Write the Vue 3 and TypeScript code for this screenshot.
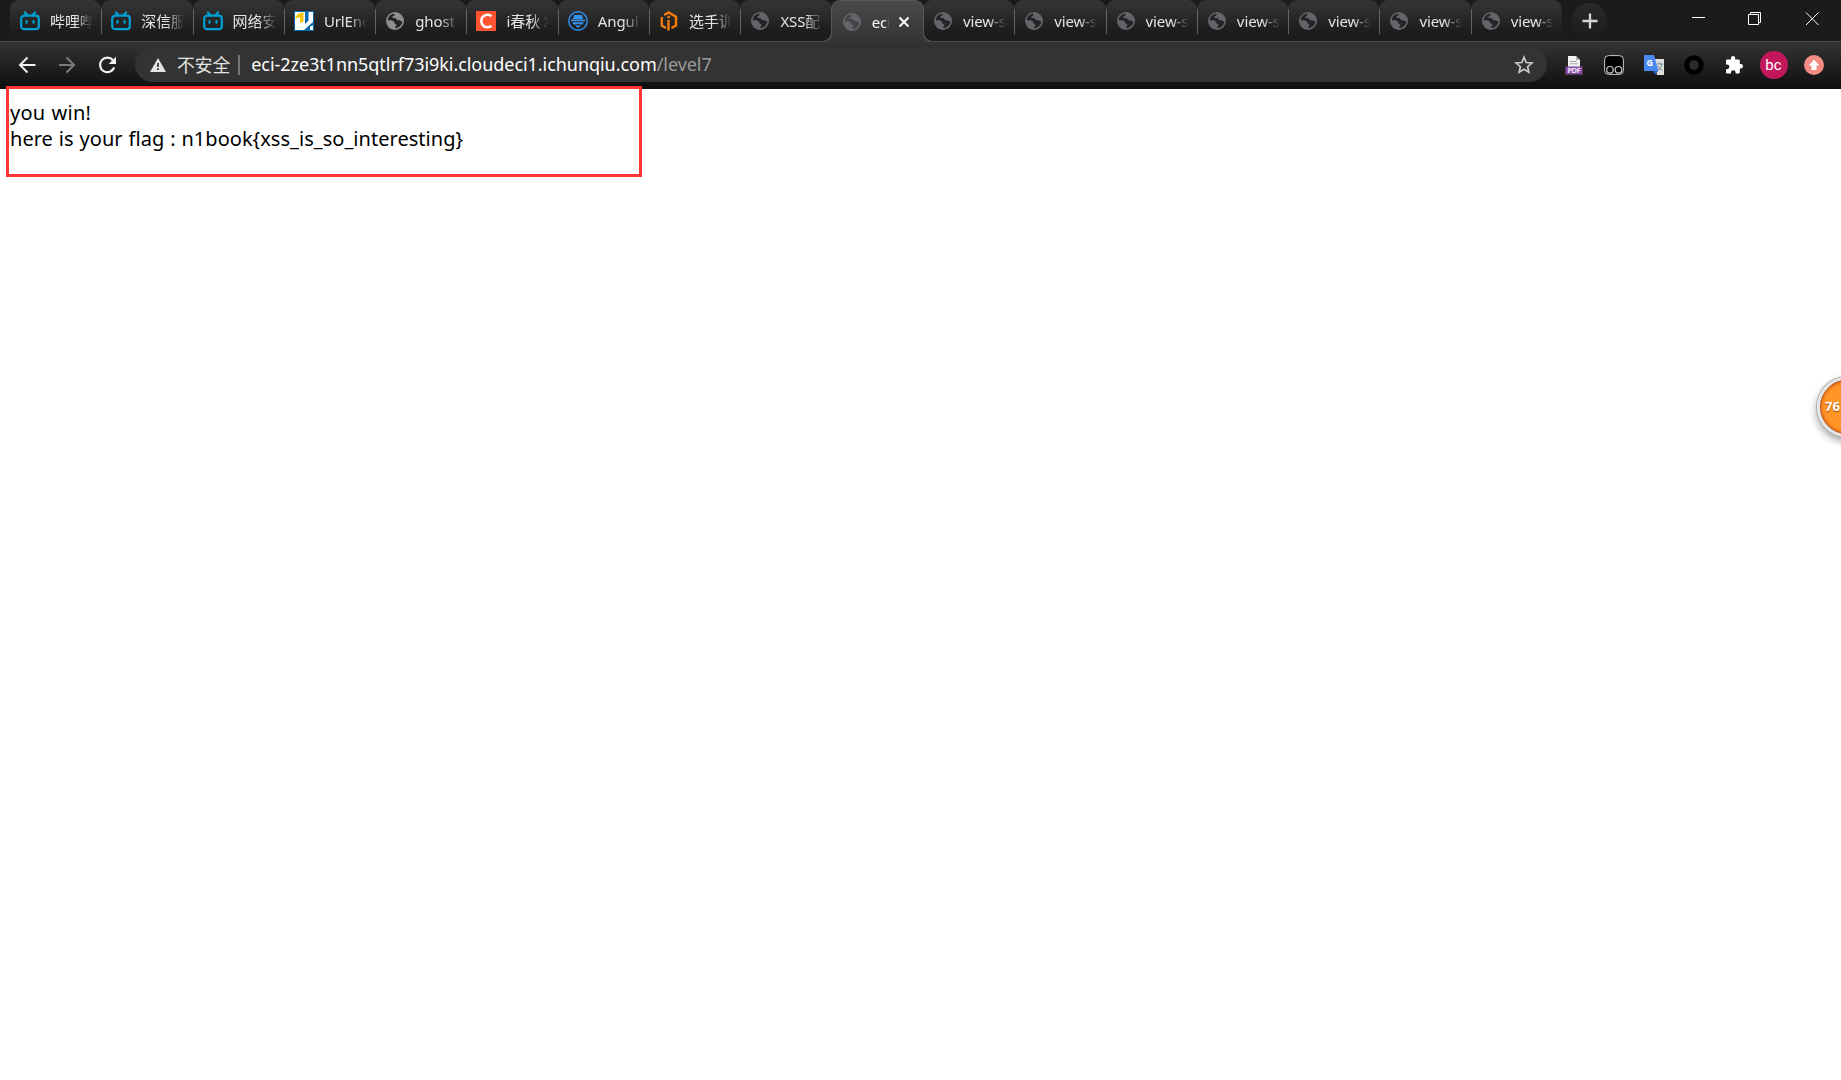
<script setup lang="ts">
interface Tab {
  icon: 'bili' | 'url' | 'globe' | 'c' | 'spy' | 'hex'
  title: string
  light?: boolean
  active?: boolean
}
const tabs: Tab[] = [
  { icon: 'bili', title: '哔哩哔' },
  { icon: 'bili', title: '深信服' },
  { icon: 'bili', title: '网络安' },
  { icon: 'url', title: 'UrlEnc' },
  { icon: 'globe', title: 'ghost', light: true },
  { icon: 'c', title: 'i春秋 X' },
  { icon: 'spy', title: 'Angul' },
  { icon: 'hex', title: '选手训' },
  { icon: 'globe', title: 'XSS配' },
  { icon: 'globe', title: 'eci', active: true },
  ...Array.from({ length: 7 }, (): Tab => ({ icon: 'globe', title: 'view-s' })),
]
</script>

<template>
  <div class="browser">
    <div class="strip">
      <div v-for="(t, i) in tabs" :key="i" class="tab" :class="{ active: t.active, sep: !t.active && i !== 8 && i !== 16 }">
        <svg v-if="t.icon === 'bili'" class="ico" viewBox="0 0 20 20" fill="none" stroke="#00a1d6" stroke-width="2.200" stroke-linecap="round">
          <rect x="1.200" y="4.600" width="17.600" height="13.600" rx="3" /><path d="M5 1.400l2.500 2.800M15 1.400l-2.500 2.800M6.500 10v1.700M13.500 10v1.700" />
        </svg>
        <svg v-else-if="t.icon === 'url'" class="ico" viewBox="0 0 20 20">
          <path fill="#0b69ae" d="M0 0h20v20H0z" /><path fill="#fff" d="M1 1h18v18H1z" />
          <path fill="#f8c300" d="M1 8C2 4 5 1.500 9.500 1.500v9L6 12V6.500C4.500 6.500 3 7 1 8z" /><path fill="#0b69ae" d="M11 1h3.500v8.500L11 13zM10 19l9-8v3.500l-3 1V19z" />
        </svg>
        <svg v-else-if="t.icon === 'globe'" class="ico" viewBox="0 0 20 20">
          <circle cx="10" cy="10" r="9" :fill="t.light ? '#8f8f8f' : '#62666b'" />
          <path :fill="t.active ? '#424242' : '#242424'" d="M2.800 9.600C2.700 6.300 5.500 3 8.800 2.800c.9 0 1 1.400.2 2-.9.500-1.800.5-1.700 1.500.1 1 1.300.7 2.400.6 1.500-.1 1.600 1.300 2.500 2 .9.500 2.200 0 2.800.7.800.9 1.500 1 2.400.5-.2 3.300-2.800 6.700-6.300 7-1.200 0-1.300-1.100-.5-1.700 1.200-.9.900-2.100-.3-2.600-1.400-.6-1-2-2-2.800-1.300-1-3.700-.8-5.500-.4z" />
        </svg>
        <svg v-else-if="t.icon === 'c'" class="ico" viewBox="0 0 20 20">
          <path fill="#ff5331" d="M0 0h20v20H0z" /><path d="M15.500 5.300A6.200 6.200 0 1 0 15.500 14.700" fill="none" stroke="#fff" stroke-width="2.600" />
        </svg>
        <svg v-else-if="t.icon === 'spy'" class="ico" viewBox="0 0 20 20">
          <circle cx="10" cy="10" r="9.200" fill="none" stroke="#2b8cea" stroke-width="1.500" />
          <path fill="#3594f0" d="M6 4h8l1 4H5zM3 8.500h14v1.700H3zM4.500 11.200h11c0 2-1.400 2.400-2.700 2.400-1.500 0-2-.9-2.800-.9s-1.300.9-2.800.9c-1.300 0-2.700-.4-2.700-2.400zM7 14.500h6L10 17z" />
        </svg>
        <svg v-else class="ico" viewBox="0 0 20 20" fill="none" stroke="#f57c0b" stroke-width="2.400">
          <path d="M5.200 4L9.500 1.500l7.500 4.300v8.700L12.500 17M2.800 6v8.500L7 17M9.500 9v10.500" /><path d="M8.300 6h2.500" />
        </svg>
        <span class="title">{{ t.title }}</span>
        <svg v-if="t.active" class="close" viewBox="0 0 12 12"><path d="M1.500 1.500l9 9m0-9l-9 9" stroke="#fff" stroke-width="2" /></svg>
      </div>
      <div class="new"><svg width="16" height="16" viewBox="0 0 16 16"><path d="M8 .5v15M.5 8h15" stroke="#d6d6d6" stroke-width="2.300" /></svg></div>
      <svg class="win" width="128" height="15" viewBox="0 0 128 15" fill="none" stroke="#fff">
        <path d="M0 6.500h13M56.500 3.500h10v10h-10zM58.500 3v-1.500h10v10H67M114 1.500l12.500 12.500m0-12.500L114 14" />
      </svg>
    </div>

    <div class="toolbar">
      <svg class="nav" width="100" height="20" viewBox="0 0 100 20" fill="none" stroke-width="2">
        <path d="M17.500 10H2.500M9.500 2.500L2 10l7.500 7.500" stroke="#f1f1f1" />
        <path d="M41 10h14.500M48.500 2.500L56 10l-7.500 7.500" stroke="#7b7b7b" />
        <path d="M95 5.200A7.300 7.300 0 1 0 96.200 12.500" stroke="#f1f1f1" stroke-width="2.200" /><path d="M98 1.700v7.300h-7.300z" fill="#f1f1f1" />
      </svg>
      <div class="address">
        <svg class="warn" width="16" height="14" viewBox="0 0 16 14"><path d="M8 0l8 14H0z" fill="#e4e4e4" /><path d="M8 5v4M8 10.300v1.800" stroke="#333" stroke-width="1.700" /></svg>
        <span class="unsafe">不安全</span><i class="bar"></i>
        <span class="host">eci-2ze3t1nn5qtlrf73i9ki.cloudeci1.ichunqiu.com</span><span class="path">/level7</span>
        <svg class="star" width="20" height="20" viewBox="0 0 20 20"><path d="M10 2.300l2.200 5.200 5.700.5-4.300 3.700 1.300 5.500-4.900-2.900-4.900 2.900 1.300-5.500L2.100 8l5.700-.5z" fill="none" stroke="#c8c8c8" stroke-width="1.700" /></svg>
      </div>
      <div class="ext">
        <svg viewBox="0 0 20 20"><path fill="#f2f2f2" d="M4 1h8l4 4v7H4z" /><path fill="#aaa" d="M12 1v4h4zM6 6h7v1H6zM6 8.300h8v1H6z" /><path fill="#854ca3" d="M1.500 11.500h17v8h-17z" /><text x="10" y="18.200" text-anchor="middle" font-size="7.500" font-weight="bold" fill="#f0e6f5" textLength="13">PDF</text></svg>
        <svg viewBox="0 0 20 20" fill="none" stroke="#c8c8c8"><rect x=".6" y=".6" width="18.800" height="18.800" rx="4" fill="#000" /><circle cx="6" cy="14.800" r="3.300" stroke-width="1.200" /><circle cx="14.500" cy="14.800" r="3.300" stroke-width="1.200" /></svg>
        <svg viewBox="0 0 20 20"><path fill="#dedede" d="M9 4h11v16h-7z" /><path d="M13 9h6M16 7.500V9M18 9c-.5 3-2 5-4 6M14 11c1 2 2.500 3.500 4.500 4.500" stroke="#6f8790" fill="none" /><path fill="#2358bc" d="M9 16h5l-3 4z" /><path fill="#4a89f3" d="M0 0h10l4.500 16H0z" /><text x="2.500" y="11.200" font-size="9" font-weight="bold" fill="#fff">G</text></svg>
        <svg viewBox="0 0 20 20"><circle cx="10" cy="10" r="7.300" fill="#2b2b2b" stroke="#000" stroke-width="5" /></svg>
        <svg viewBox="0 0 20 20"><path fill="#fff" d="M3 4.500H7V3a2 2 0 0 1 4.200 0v1.500h3.600q1 0 1 1V9h1a2.200 2.200 0 0 1 0 4.400h-1V17.500q0 1-1 1h-3.200v-1a2.300 2.300 0 0 0-4.600 0v1H3q-1 0-1-1v-3.300h1a2.400 2.400 0 0 0 0-4.800H2V5.500q0-1 1-1z" /></svg>
        <span class="avatar">bc</span>
        <svg viewBox="0 0 20 20"><circle cx="10" cy="10" r="10" fill="#f28b82" /><path fill="#fff" d="M10 4.500l5.300 6H12.500V15h-5v-4.500H4.700z" /></svg>
      </div>
    </div>

    <main class="page">
      <p>you win!</p>
      <p>here is your flag : n1book{xss_is_so_interesting}</p>
      <div class="frame"></div>
      <div class="badge">76</div>
    </main>
  </div>
</template>

<style>
body { margin: 0; background: #fff; overflow: hidden; }
</style>
<style scoped>
.browser { width: 1841px; height: 1080px; overflow: hidden; position: relative; font-family: "Noto Sans", "Noto Sans CJK SC", sans-serif; }
svg { display: block; flex: none; }
.strip { height: 42px; box-sizing: border-box; background: #1b1b1b; border-bottom: 1px solid #4a4a4a; display: flex; padding-left: 10px; }
.tab { width: 91.300px; height: 41px; flex: none; box-sizing: border-box; position: relative; display: flex; align-items: center; padding: 1px 0 0 10px; border-radius: 9px 9px 0 0; background: linear-gradient(#333 0, #303030 8px, #1d1d1d 31px); }
.tab.sep::after { content: ""; position: absolute; z-index: 1; right: -1px; top: 9px; width: 1px; height: 25px; background: #646464; }
.tab.active { height: 42px; z-index: 2; width: 93.300px; margin: 0 -1px; background: linear-gradient(#4a4a4a, #343434); border: 1px solid #575757; border-width: 1px 1px 0; padding-top: 0; }
.tab.active::before, .tab.active::after { content: ""; position: absolute; bottom: 0; width: 9px; height: 9px; }
.tab.active::before { left: -9px; background: radial-gradient(circle at 0 0, #1d1d1d 7.500px, #535353 8px 8.800px, #373737 9.300px); }
.tab.active::after { right: -9px; background: radial-gradient(circle at 100% 0, #1d1d1d 7.500px, #535353 8px 8.800px, #373737 9.300px); }
.ico { width: 20px; height: 20px; }
.title { margin-left: 10px; width: 43px; overflow: hidden; white-space: nowrap; font-size: 15px; line-height: 22px; color: #e4e4e4; letter-spacing: -.1px; -webkit-mask-image: linear-gradient(90deg, #000 25px, #0003 38px, transparent 43px); mask-image: linear-gradient(90deg, #000 25px, #0006 36px, transparent 43px); }
.active .title { margin-left: 10px; width: 17px; color: #fff; -webkit-mask-image: linear-gradient(90deg, #000 12px, transparent 18px); mask-image: linear-gradient(90deg, #000 12px, transparent 18px); }
.close { width: 12px; height: 12px; margin-left: 9px; }
.new { width: 35px; height: 35px; margin: 3px 0 0 10px; border-radius: 50%; background: linear-gradient(#2a2a2a, #1b1b1b); display: flex; align-items: center; justify-content: center; }
.win { margin: 11px 21px 0 auto; }
.toolbar { height: 47px; box-sizing: border-box; padding-bottom: 2px; background: linear-gradient(#343434, #0e0e0e); display: flex; align-items: center; }
.nav { margin: 0 17px 0 18px; }
.address { width: 1412px; height: 35px; box-sizing: border-box; border-radius: 18px; background: #333; display: flex; align-items: center; padding: 0 13px 0 15px; font-size: 18px; letter-spacing: -.05px; color: #fff; white-space: nowrap; }
.unsafe { margin-left: 11px; color: #e5e5e5; font-size: 17.800px; }
.unsafe, .host, .path { padding-bottom: 2px; }
.bar { width: 2px; height: 20px; background: #777; margin: 0 11px 0 8px; }
.path { color: #9b9b9b; }
.star { margin-left: auto; }
.ext { display: flex; align-items: center; gap: 20px; margin-left: 16.500px; }
.ext svg { width: 20px; height: 20px; }
.avatar { width: 28px; height: 28px; border-radius: 50%; background: #c2185b; color: #fff; font: 15px/28px Roboto, sans-serif; text-align: center; margin: 0 -4px; }
.page { padding: 11px 0 0 10px; font-size: 20px; line-height: 26px; letter-spacing: .03px; word-spacing: .7px; color: #000; }
.page p { margin: 0; white-space: nowrap; width: max-content; }
.page p:first-child { letter-spacing: .25px; }
.frame { position: absolute; left: 6px; top: 86px; width: 636px; height: 91px; box-sizing: border-box; border: 3px solid #ff3434; }
.badge { position: absolute; left: 1817px; top: 377px; width: 60px; height: 60px; box-sizing: border-box; border-radius: 50%; border: 3px solid #e4e4e4; background: radial-gradient(circle, #ff9627 0 22px, #fa811b 25px, #a9521d 27px); box-shadow: 0 0 0 1px #aaa, 0 4px 9px #0006; color: #fff; font: bold 13px/52px "Noto Sans", sans-serif; letter-spacing: 0; padding-left: 5px; text-shadow: 0 1px 1px #914300; }
</style>
